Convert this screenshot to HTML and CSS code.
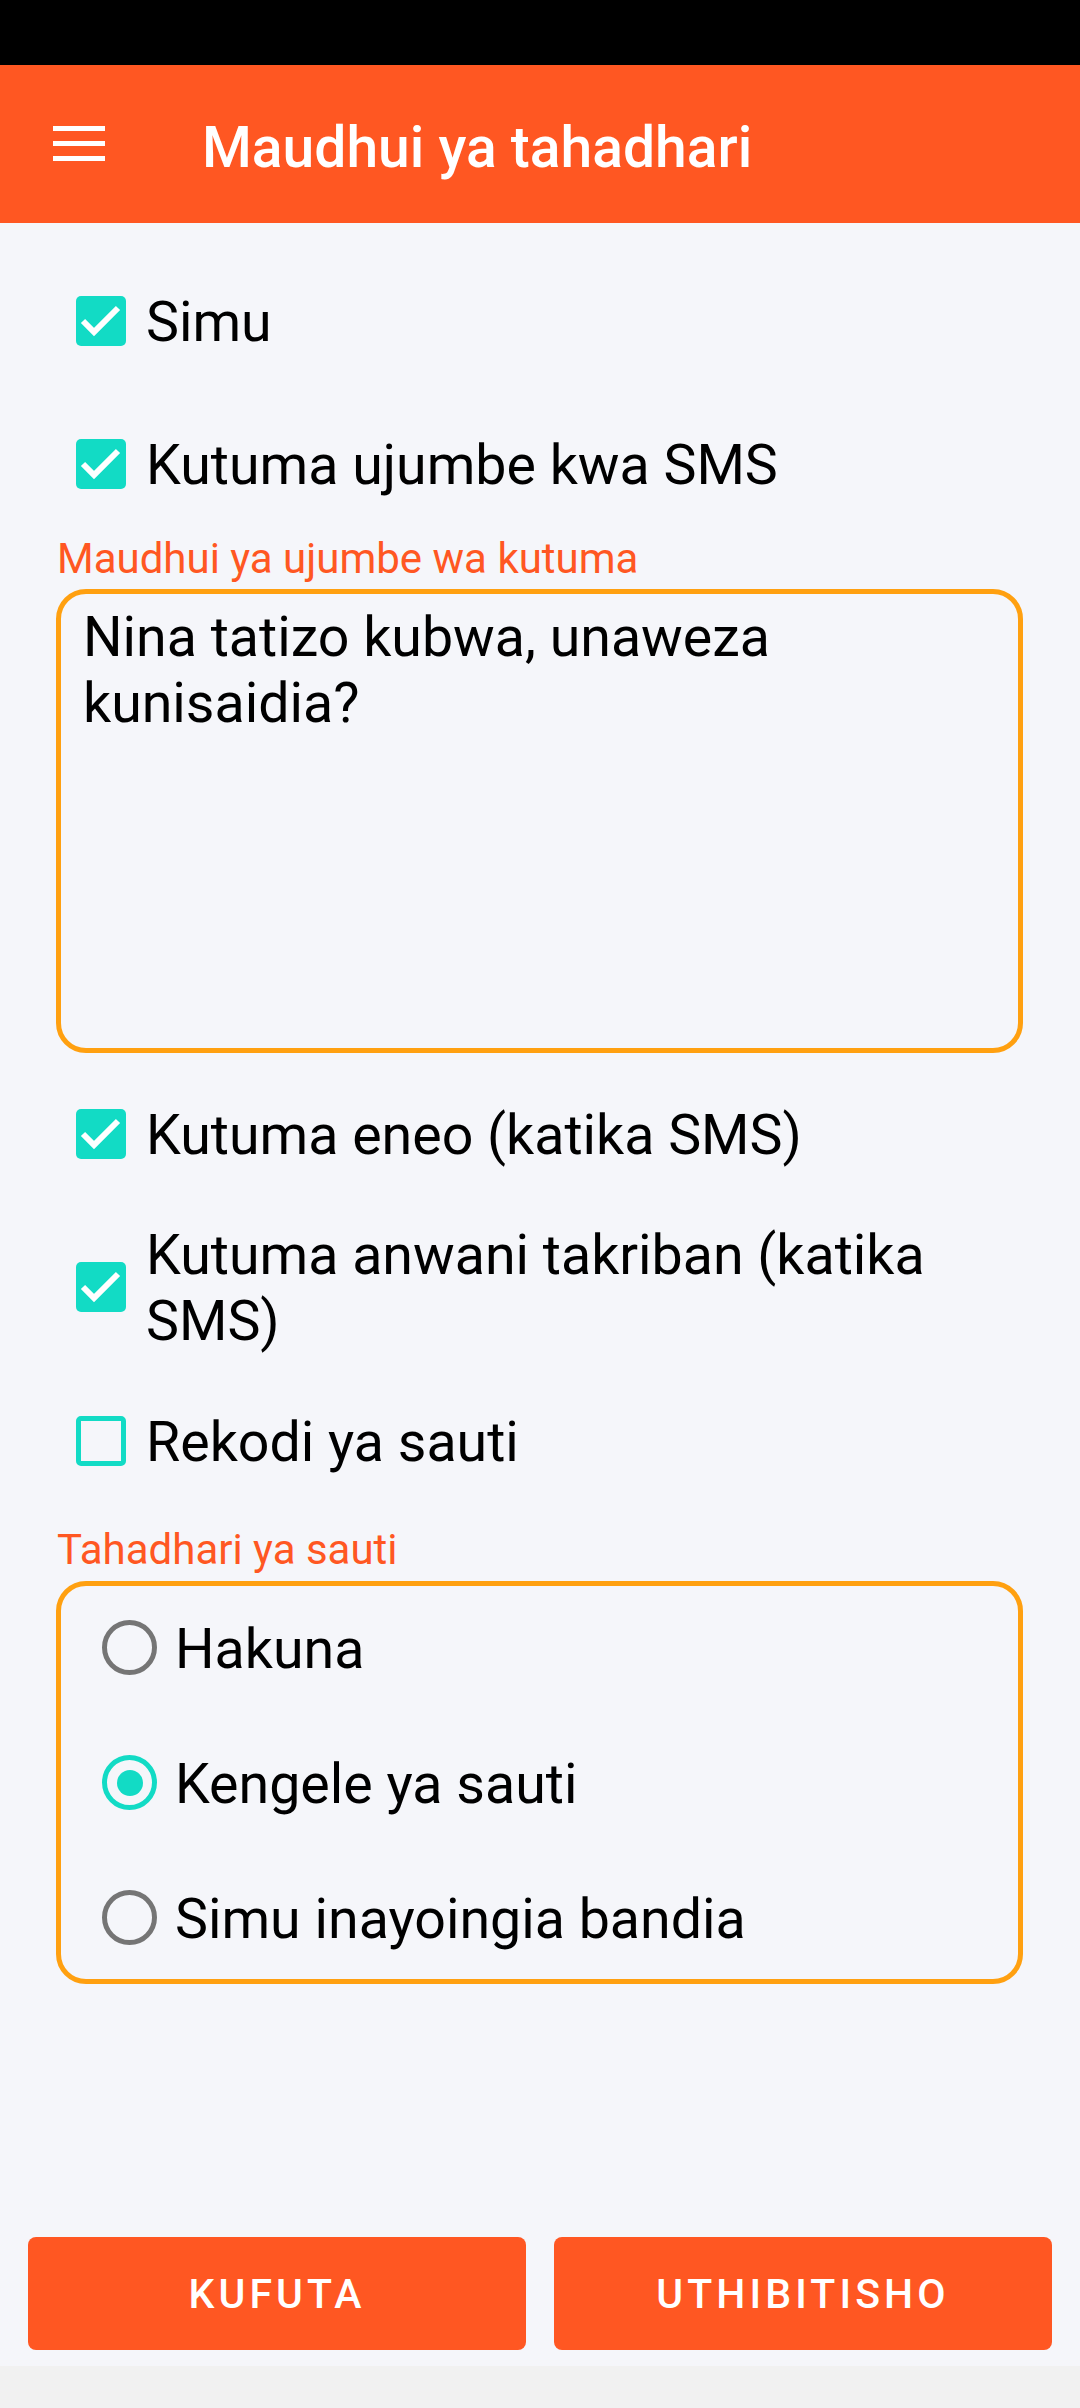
FILE: index.html
```html
<!DOCTYPE html>
<html lang="sw">
<head>
    <meta charset="UTF-8">
    <meta name="viewport" content="width=device-width, initial-scale=1.0">
    <title>Maudhui ya tahadhari</title>
    <link rel="stylesheet" href="styles.css">
</head>
<body>
    <div class="status-bar"></div>
    <header class="app-bar">
        <svg class="menu-icon" width="52" height="36" viewBox="0 0 52 36">
            <rect x="0" y="0" width="52" height="5" fill="#fff"/>
            <rect x="0" y="15" width="52" height="5" fill="#fff"/>
            <rect x="0" y="30" width="52" height="5" fill="#fff"/>
        </svg>
        <h1 class="app-title">Maudhui ya tahadhari</h1>
    </header>

    <main class="content">
        <label class="check-row">
            <span class="box checked">
                <svg width="50" height="50" viewBox="0 0 50 50"><polyline points="7,25 18,36 42,12" fill="none" stroke="#fff" stroke-width="6"/></svg>
            </span>
            <span class="check-text">Simu</span>
        </label>
        <label class="check-row">
            <span class="box checked">
                <svg width="50" height="50" viewBox="0 0 50 50"><polyline points="7,25 18,36 42,12" fill="none" stroke="#fff" stroke-width="6"/></svg>
            </span>
            <span class="check-text">Kutuma ujumbe kwa SMS</span>
        </label>

        <div class="field-label first">Maudhui ya ujumbe wa kutuma</div>
        <div class="message-box">Nina tatizo kubwa, unaweza kunisaidia?</div>

        <label class="check-row after-box">
            <span class="box checked">
                <svg width="50" height="50" viewBox="0 0 50 50"><polyline points="7,25 18,36 42,12" fill="none" stroke="#fff" stroke-width="6"/></svg>
            </span>
            <span class="check-text">Kutuma eneo (katika SMS)</span>
        </label>
        <label class="check-row">
            <span class="box checked">
                <svg width="50" height="50" viewBox="0 0 50 50"><polyline points="7,25 18,36 42,12" fill="none" stroke="#fff" stroke-width="6"/></svg>
            </span>
            <span class="check-text">Kutuma anwani takriban (katika SMS)</span>
        </label>
        <label class="check-row">
            <span class="box"></span>
            <span class="check-text">Rekodi ya sauti</span>
        </label>

        <div class="field-label second">Tahadhari ya sauti</div>
        <div class="radio-group">
            <div class="radio-row">
                <span class="radio"></span>
                <span class="radio-text">Hakuna</span>
            </div>
            <div class="radio-row">
                <span class="radio selected"></span>
                <span class="radio-text">Kengele ya sauti</span>
            </div>
            <div class="radio-row">
                <span class="radio"></span>
                <span class="radio-text">Simu inayoingia bandia</span>
            </div>
        </div>
    </main>

    <div class="actions">
        <button class="action-btn">KUFUTA</button>
        <button class="action-btn">UTHIBITISHO</button>
    </div>
    <div class="nav-bar"></div>
</body>
</html>
```

FILE: styles.css
```css
* {
    box-sizing: border-box;
}

body {
    margin: 0;
    padding: 0;
    height: 2408px;
    display: flex;
    flex-direction: column;
    font-family: Roboto, "Noto Sans", Arial, sans-serif;
    background-color: #f5f6fa;
    color: #000;
}

.status-bar {
    height: 65px;
    background-color: #000;
}

.app-bar {
    height: 158px;
    background-color: #ff5722;
    display: flex;
    align-items: center;
    padding-left: 53px;
}

.menu-icon {
    display: block;
}

.app-title {
    margin: 8px 0 0 97px;
    font-size: 57px;
    font-weight: 500;
    line-height: 66px;
    color: #fff;
}

.content {
    flex: 1;
    padding-top: 26px;
}

.check-row {
    display: flex;
    align-items: center;
    min-height: 143px;
    padding: 14px 40px 14px 76px;
}

.check-row.after-box {
    margin-top: 9px;
}

.box {
    flex-shrink: 0;
    width: 50px;
    height: 50px;
    border: 5px solid #12dbc5;
    border-radius: 5px;
    margin-right: 20px;
}

.box.checked {
    border: none;
    background-color: #12dbc5;
}

.box svg {
    display: block;
}

.check-text {
    padding-top: 4px;
    font-size: 55.5px;
    line-height: 66px;
}

.field-label {
    margin-left: 57px;
    font-size: 42px;
    line-height: 48px;
    color: #ff5722;
}

.field-label.first {
    margin-top: 0;
}

.field-label.second {
    margin-top: 14px;
}

.message-box {
    margin: 6px 57px 0 56px;
    height: 464px;
    border: 5px solid #ffa010;
    border-radius: 30px;
    padding: 11px 60px 0 22px;
    font-size: 55.5px;
    line-height: 66px;
}

.radio-group {
    margin: 7px 57px 0 56px;
    height: 403px;
    border: 5px solid #ffa010;
    border-radius: 30px;
    padding-left: 41px;
    display: flex;
    flex-direction: column;
    justify-content: center;
}

.radio-row {
    flex-shrink: 0;
    height: 135px;
    display: flex;
    align-items: center;
}

.radio {
    flex-shrink: 0;
    width: 55px;
    height: 55px;
    border: 5.5px solid #757575;
    border-radius: 50%;
    margin-right: 18px;
    display: flex;
    align-items: center;
    justify-content: center;
}

.radio.selected {
    border-color: #12dbc5;
}

.radio.selected::after {
    content: "";
    width: 26px;
    height: 26px;
    border-radius: 50%;
    background-color: #12dbc5;
}

.radio-text {
    padding-top: 4px;
    font-size: 55.5px;
    line-height: 66px;
}

.actions {
    display: flex;
    gap: 28px;
    padding: 0 28px 16px;
}

.action-btn {
    flex: 1;
    height: 113px;
    border: none;
    border-radius: 8px;
    background-color: #ff5722;
    color: #fff;
    font-family: Roboto, Arial, sans-serif;
    font-size: 41px;
    font-weight: 500;
    letter-spacing: 0.1em;
}

.nav-bar {
    height: 42px;
    background-color: #f1f1f1;
}
```
